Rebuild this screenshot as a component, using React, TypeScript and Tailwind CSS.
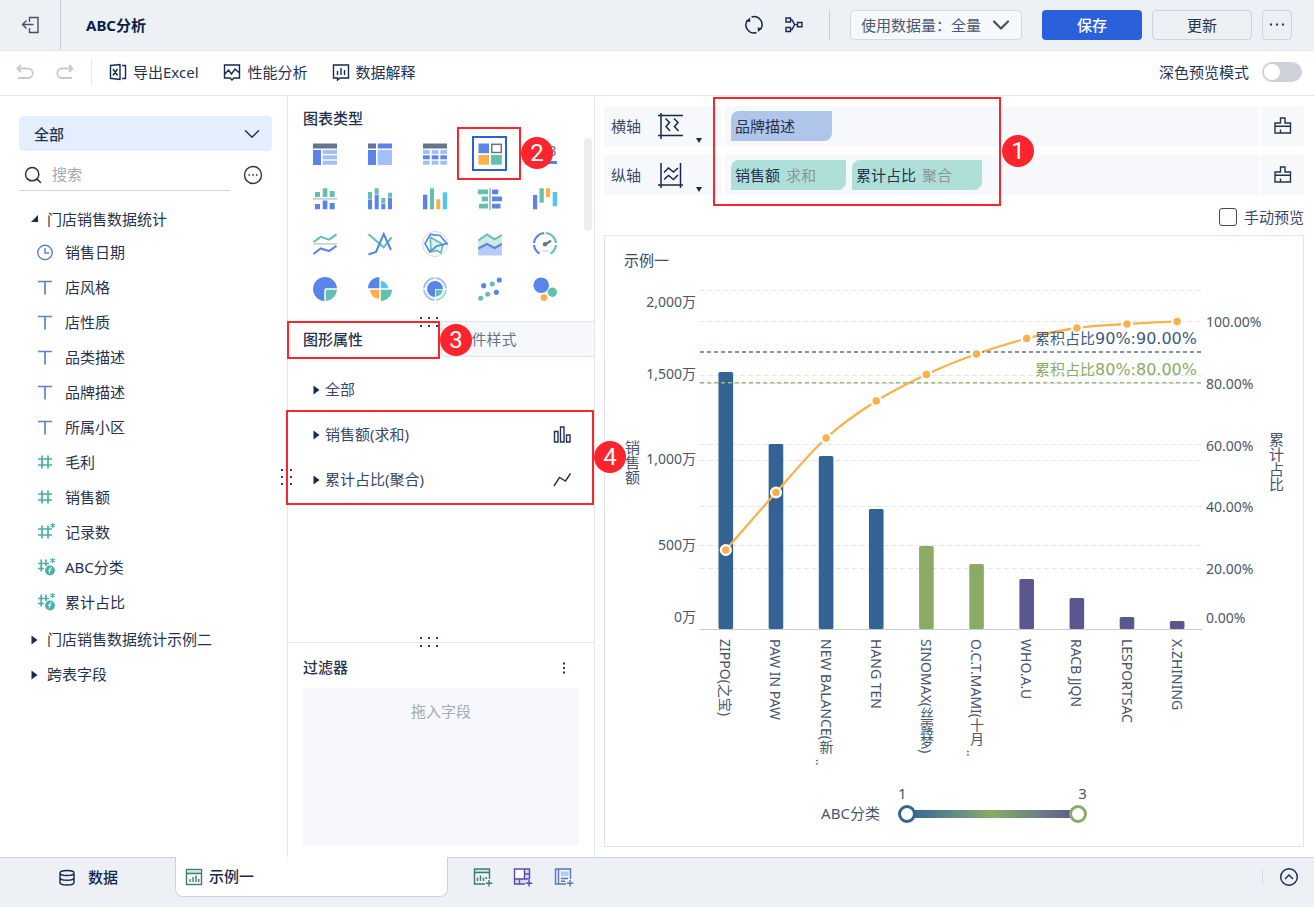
import type { ReactNode } from 'react'
import clsx from 'clsx'
import { ChevronDown, Search } from 'lucide-react'

const BLUE = '#5b84eb'
const LIGHT = '#a3bff7'
const GREEN = '#62bfb1'
const ORANGE = '#fbb04b'
const CYAN = '#50c8f5'
const SLATE = '#66758f'

type FieldKind = 'date' | 'text' | 'number' | 'count' | 'calc'

const fields: { name: string; kind: FieldKind }[] = [
  { name: '销售日期', kind: 'date' },
  { name: '店风格', kind: 'text' },
  { name: '店性质', kind: 'text' },
  { name: '品类描述', kind: 'text' },
  { name: '品牌描述', kind: 'text' },
  { name: '所属小区', kind: 'text' },
  { name: '毛利', kind: 'number' },
  { name: '销售额', kind: 'number' },
  { name: '记录数', kind: 'count' },
  { name: 'ABC分类', kind: 'calc' },
  { name: '累计占比', kind: 'calc' },
]

function Icon({ children, className, size = 20 }: { children: ReactNode; className?: string; size?: number }) {
  return (
    <svg
      width={size}
      height={size}
      viewBox={`0 0 ${size} ${size}`}
      fill="none"
      stroke="currentColor"
      strokeWidth="1.4"
      aria-hidden="true"
      className={clsx('shrink-0', className)}
    >
      {children}
    </svg>
  )
}

function FieldIcon({ kind }: { kind: FieldKind }) {
  if (kind === 'date') {
    return (
      <Icon className="text-[#5c82d0]">
        <circle cx="10" cy="9.500" r="7.200" />
        <path d="M10 5v5h4" />
      </Icon>
    )
  }
  if (kind === 'text') {
    return (
      <Icon className="text-[#6280c8]">
        <path d="M3 3.500h14M10 3.500v13" strokeWidth="1.700" />
      </Icon>
    )
  }
  if (kind === 'calc') {
    return (
      <Icon className="text-[#45b0a8]">
        <path d="M3 5.500h11M3 10.500h6M6.200 1.500v12M11 1.500V8" strokeWidth="1.700" />
        <path d="M17.500 0v5M15.300 1.200l4.400 2.500M19.700 1.200l-4.400 2.500" strokeWidth="1.100" />
        <circle cx="15" cy="12.500" r="4.900" fill="currentColor" stroke="none" />
        <path d="M16.800 9.800q-1.800-.5-2 1.500l-.5 4M13 12.200h3.300" stroke="#fff" strokeWidth="1" />
      </Icon>
    )
  }
  return (
    <Icon className="text-[#45b0a8]">
      <path d="M3 6h14M3 12h14M7 2.500v13M13 2.500v13" strokeWidth="1.700" />
      {kind === 'count' && <path d="M17.800 0v5M15.600 1.200L20 3.700M20 1.200l-4.400 2.500" strokeWidth="1.100" />}
    </Icon>
  )
}

function Caret({ open = false }: { open?: boolean }) {
  return (
    <svg width="8" height="10" viewBox="0 0 8 10" fill="#162c4f" aria-hidden="true" className="shrink-0">
      {open ? <path d="M7 1v7H0z" /> : <path d="M.5.500L6.500 5l-6 4.500z" />}
    </svg>
  )
}

function DragDots({ vertical = false, className }: { vertical?: boolean; className?: string }) {
  return (
    <span
      aria-hidden="true"
      className={clsx('absolute z-10 grid', vertical ? 'grid-cols-2 gap-x-[7px] gap-y-[5px]' : 'grid-cols-3 gap-x-[6px] gap-y-[6px]', className)}
    >
      {[0, 1, 2, 3, 4, 5].map((i) => (
        <i key={i} className="h-0.5 w-0.5 bg-[#2d3a57]" />
      ))}
    </span>
  )
}

function Step({ n, className }: { n: number; className: string }) {
  return (
    <span
      className={clsx(
        "absolute z-20 flex h-8 w-8 items-center justify-center rounded-full bg-[#fd252d] font-['Roboto',sans-serif] text-2xl text-white",
        className,
      )}
    >
      {n}
    </span>
  )
}

function Outline({ className }: { className: string }) {
  return <div className={clsx('pointer-events-none absolute z-10 border-2 border-[#fd252d]', className)} />
}

// chart type glyphs, each on a 24x24 grid
const chartTypes: { label: string; glyph: ReactNode }[] = [
  {
    label: '分组表',
    glyph: (
      <>
        <rect y="1.500" width="24" height="5" fill={SLATE} />
        <rect y="8" width="8" height="15" fill={BLUE} />
        {[8, 13.300, 18.700].map((y) => <rect key={y} x="9.700" y={y} width="14.300" height="4" fill={LIGHT} />)}
      </>
    ),
  },
  {
    label: '交叉表',
    glyph: (
      <>
        <rect y="1.500" width="8" height="5" fill={SLATE} />
        <rect x="9.700" y="1.500" width="14.300" height="5" fill={BLUE} />
        <rect y="8" width="8" height="15" fill={BLUE} />
        <rect x="9.700" y="8" width="14.300" height="15" fill={LIGHT} />
      </>
    ),
  },
  {
    label: '明细表',
    glyph: (
      <>
        <rect y="1.500" width="24" height="5" fill={SLATE} />
        {[8, 13.300, 18.700].map((y, r) =>
          [0, 8.700, 17.300].map((x) => <rect key={`${x}-${y}`} x={x} y={y} width="6.700" height="4" fill={r === 1 ? BLUE : LIGHT} />),
        )}
      </>
    ),
  },
  {
    label: '自定义图表',
    glyph: (
      <>
        <rect x="0.500" y="1.500" width="10.500" height="9.700" fill={BLUE} />
        <rect x="13.800" y="2.300" width="9.500" height="8.200" fill="#fff" stroke={SLATE} strokeWidth="1.500" />
        <rect x="0.500" y="13" width="10.500" height="9.700" fill={ORANGE} />
        <rect x="13" y="13" width="10.800" height="9.700" fill={GREEN} />
      </>
    ),
  },
  {
    label: 'KPI指标卡',
    glyph: (
      <>
        <text x="0" y="14" fontSize="14" fontFamily="Liberation Sans" fill={SLATE}>123</text>
        <rect y="19" width="24" height="3" fill={BLUE} />
      </>
    ),
  },
  {
    label: '对比柱状图',
    glyph: (
      <>
        <path d="M2 5h5v5H2zM9.700 1.300h4.700V10H9.700zM16.700 4h5v6h-5z" fill={GREEN} />
        <path d="M0 11h24v1.700H0z" fill="#c5cad3" />
        <path d="M2 17h5v5.300H2zM9.700 13.500h4.700v8.800H9.700zM16.700 16h5v6.300h-5z" fill={BLUE} />
      </>
    ),
  },
  {
    label: '堆积柱状图',
    glyph: (
      <>
        <path d="M0 5h4v7H0zM6.700 1.300h4v6.200h-4zM13.300 11h4v5.300h-4zM20 5.700h4v4.600h-4z" fill={GREEN} />
        <path d="M0 12.600h4v9.700H0zM6.700 8h4v14.300h-4zM13.300 16.700h4v5.600h-4zM20 10.700h4v11.600h-4z" fill={BLUE} />
      </>
    ),
  },
  {
    label: '多系列柱状图',
    glyph: (
      <>
        <path d="M0 7.700h4.300v14.600H0z" fill={BLUE} />
        <path d="M7 1.300h4v21H7z" fill={GREEN} />
        <path d="M13.300 12.300h4v10h-4z" fill={ORANGE} />
        <path d="M19.700 5.300H24v17h-4.300z" fill={CYAN} />
      </>
    ),
  },
  {
    label: '对比条形图',
    glyph: (
      <>
        <path d="M0 2.500h10v4.800H0zM3.700 9.500H10v4.800H3.700zM1 16.700h9v4.800H1z" fill={GREEN} />
        <path d="M11.200 1h1.600v22h-1.600z" fill="#a9b1be" />
        <path d="M14 2.500h6.300v4.800H14zM14 9.500h10v4.800H14zM14 16.700h8.500v4.800H14z" fill={BLUE} />
      </>
    ),
  },
  {
    label: '瀑布图',
    glyph: (
      <>
        <path d="M0 8h4.200v14.300H0z" fill={BLUE} />
        <path d="M6.500 1.300h4.300v14.400H6.500z" fill={GREEN} />
        <path d="M13 1.300h4.200V10H13z" fill={ORANGE} />
        <path d="M19.700 5H24v14.300h-4.300z" fill={CYAN} />
      </>
    ),
  },
  {
    label: '折线图',
    glyph: (
      <g fill="none" strokeWidth="2.100">
        <path d="M.5 10l7.200-5.200L16 7.700l7.500-5.400" stroke={GREEN} />
        <path d="M0 11.900h24" stroke="#c5cad3" strokeWidth="1.500" />
        <path d="M.5 22l7.200-5.500L16 19l7.500-5.200" stroke={BLUE} />
      </g>
    ),
  },
  {
    label: '曲线图',
    glyph: (
      <g fill="none" strokeWidth="2.100">
        <path d="M.5 2.300l15.200 13L23.500 5.500" stroke={GREEN} />
        <path d="M.5 22.500L8 20l7.700-18L23 18" stroke={BLUE} />
      </g>
    ),
  },
  {
    label: '雷达图',
    glyph: (
      <g fill="none" strokeWidth="1.700">
        <circle cx="12" cy="12" r="12.500" stroke="#d3d8e2" strokeWidth="1" />
        <path d="M7.300 5.300L20 12.500 18 21l-4.500-2.500L8 20z" stroke={GREEN} fill="#dff2ee" />
        <path d="M7.300 2.300L17 3.500l7 8.200L13.700 14l-7 6L2 11.500z" stroke={BLUE} />
      </g>
    ),
  },
  {
    label: '面积图',
    glyph: (
      <>
        <path d="M.3 8.500L9 3l7.500 4.800L23.800 3v20H.3z" fill="#cfe9e3" />
        <path d="M.3 17L9 12.300l7.500 4L23.800 12v11.500H.3z" fill="#b9cbf6" />
        <path d="M.3 8.500L9 2.500l7.500 4.900 7.300-4.400" stroke={GREEN} strokeWidth="2" fill="none" />
        <path d="M.3 16.500L9 12l7.500 4 7.300-4" stroke={BLUE} strokeWidth="2" fill="none" />
      </>
    ),
  },
  {
    label: '仪表盘',
    glyph: (
      <g fill="none" strokeWidth="2.200">
        <path d="M6.500 21.500A11 11 0 0 1 1 13M1 11.200A11 11 0 0 1 11.200 1" stroke={BLUE} />
        <path d="M12.800 1A11 11 0 0 1 23 11.200M23 13a11 11 0 0 1-5.500 8.500" stroke={GREEN} />
        <path d="M12.500 12.300L18 8.800" stroke={SLATE} />
        <circle cx="12" cy="12.300" r="2.200" fill={SLATE} stroke="none" />
        <path d="M8.500 19h7" stroke="#d3d8e2" strokeWidth="1.300" />
      </g>
    ),
  },
  {
    label: '饼图',
    glyph: (
      <>
        <path d="M11.300 12.700V24A12 12 0 1 1 24 11.300H12.500z" fill={BLUE} />
        <path d="M12.800 12.800H24A12 12 0 0 1 12.800 24z" fill={GREEN} />
      </>
    ),
  },
  {
    label: '玫瑰图',
    glyph: (
      <>
        <path d="M11.300 11.300H0A11.500 11.500 0 0 1 11.300 0z" fill={BLUE} />
        <path d="M12.800 11.300V4a7.300 7.300 0 0 1 7.200 7.300z" fill={CYAN} />
        <path d="M11.300 12.700v9.300A9.300 9.300 0 0 1 2 12.700z" fill={ORANGE} />
        <path d="M12.800 12.700H24A11.500 11.500 0 0 1 12.800 24z" fill={GREEN} />
      </>
    ),
  },
  {
    label: '旭日图',
    glyph: (
      <g fill="none" strokeWidth="2">
        <path d="M11.300 23A11 11 0 0 1 1 12.700M1 11.300A11 11 0 0 1 11.300 1M12.700 1A11 11 0 0 1 23 11.300" stroke={LIGHT} />
        <path d="M23 12.700A11 11 0 0 1 12.700 23" stroke="#a5dbd1" />
        <path d="M12 12v8a8 8 0 1 1 8-8z" fill={BLUE} stroke="none" />
        <path d="M12.800 12.800h7a7.500 7.500 0 0 1-7 7z" fill={GREEN} stroke="none" />
      </g>
    ),
  },
  {
    label: '散点图',
    glyph: (
      <>
        {[[5.700, 8.700], [21.300, 3], [18.300, 15.300]].map(([x, y]) => <circle key={x} cx={x} cy={y} r="2.600" fill={BLUE} />)}
        {[[14.300, 6.900], [9.700, 17.200], [2.700, 21.300]].map(([x, y]) => <circle key={x} cx={x} cy={y} r="2.500" fill={GREEN} />)}
      </>
    ),
  },
  {
    label: '气泡图',
    glyph: (
      <>
        <circle cx="8.200" cy="8.200" r="7.800" fill={BLUE} />
        <circle cx="19.300" cy="15.300" r="4.700" fill={GREEN} />
        <circle cx="11" cy="20.600" r="3.400" fill={ORANGE} />
      </>
    ),
  },
]

function Header() {
  return (
    <header className="flex h-[51px] items-center border-b border-[#e3e7ee] bg-[#edf0f5] pr-[22px]">
      <button type="button" aria-label="退出" className="flex h-full w-[61px] items-center justify-center border-r border-[#c9ced8]">
        <Icon className="text-[#44526b]">
          <path d="M9.500 7V2.500h8.500v15H9.500V13M2.500 9.500h11M6.500 5.500l-4 4 4 4" />
        </Icon>
      </button>
      <h1 className="ml-[25px] flex-1 text-[15px] font-bold text-[#0b1f45]">ABC分析</h1>
      <div className="flex items-center gap-5 text-[#14294d]">
        <button type="button" aria-label="刷新">
          <Icon>
            <path d="M7.500 2a8 8 0 0 1 9 12.300M12.500 17.500A8 8 0 0 1 3.500 5.200" strokeWidth="1.500" />
            <path d="M1.800 6.300L6 2.500l.3 4.600zM18.200 13.200L14 17l-.3-4.600z" fill="currentColor" stroke="none" />
          </Icon>
        </button>
        <button type="button" aria-label="血缘关系">
          <Icon>
            <path d="M2 3h4.500v4H2zM2 12.500h4.500v4H2zM13.500 7.500H18v4.200h-4.500zM6.500 5H8l2.700 4.600L8 14.500H6.500M10.700 9.600h2.800" />
          </Icon>
        </button>
      </div>
      <span className="mx-5 ml-[25px] h-[30px] w-px bg-[#c9ced8]" />
      <label className="relative flex h-[30px] w-[172px] items-center rounded-sm border border-[#d5dae2] bg-[#f7f8fb]">
        <span className="sr-only">使用数据量</span>
        <select className="w-full appearance-none bg-transparent pl-2.5 text-[15px] leading-6 text-[#4b5a70]">
          <option>使用数据量：全量</option>
        </select>
        <ChevronDown className="pointer-events-none absolute right-1.5 text-[#44526b]" size={28} strokeWidth={1.900} />
      </label>
      <div className="ml-5 flex gap-2.5 text-[15px]">
        <button type="button" className="h-[30px] w-[100px] rounded-sm bg-[#2b60dd] font-medium text-white">保存</button>
        <button type="button" className="h-[30px] w-[100px] rounded-sm border border-[#cdd2dc] text-[#25334d]">更新</button>
        <button type="button" aria-label="更多" className="flex h-[30px] w-[30px] items-center justify-center rounded-sm border border-[#cdd2dc]">
          <Icon className="text-[#25334d]" size={20}>
            <path d="M3 9.500h2M9 9.500h2M15 9.500h2" strokeWidth="2" />
          </Icon>
        </button>
      </div>
    </header>
  )
}

function Toolbar() {
  return (
    <div className="flex h-[45px] items-center border-b border-[#e3e7ee] bg-white pr-3 pb-0.5 pl-[15px] text-[15px] text-[#25334d]">
      <div className="flex gap-5 text-[#c4c9d3]">
        <button type="button" aria-label="撤销">
          <Icon>
            <path d="M6 3L2.500 6.500 6 10M2.500 6.500H13a4 4 0 0 1 0 9.500H3" strokeWidth="1.800" />
          </Icon>
        </button>
        <button type="button" aria-label="重做">
          <Icon>
            <path d="M14 3l3.500 3.500L14 10M17.500 6.500H7A4 4 0 0 0 7 16h10" strokeWidth="1.800" />
          </Icon>
        </button>
      </div>
      <span className="mx-4 h-[26px] w-px bg-[#e3e7ee]" />
      <div className="flex gap-[23px]">
        <button type="button" className="flex items-center gap-[5px]">
          <Icon className="text-[#14294d]">
            <path d="M2.500 3.500L12 2.500v15l-9.500-1.200zM14 3.500h3.500v13H14M5 7l4.500 6.500M9.500 7L5 13.500" />
          </Icon>
          导出Excel
        </button>
        <button type="button" className="flex items-center gap-[6px]">
          <Icon className="text-[#14294d]">
            <path d="M2.500 3h15v13H12l-2 2-2-2H2.500zM2.500 12.500l4-4.500 3 4 3.500-5 4.500 4" />
          </Icon>
          性能分析
        </button>
        <button type="button" className="flex items-center gap-[5px]">
          <Icon className="text-[#14294d]">
            <path d="M2.500 3h15v13H9l-2.500 2v-2h-4zM6.500 9v4M10 6v7M13.500 8v5" />
          </Icon>
          数据解释
        </button>
      </div>
      <label className="ml-auto flex items-center gap-[13px]">
        深色预览模式
        <input
          type="checkbox"
          className="h-5 w-10 appearance-none rounded-full bg-[#cdd2da] before:m-0.5 before:block before:h-4 before:w-4 before:rounded-full before:bg-white"
        />
      </label>
    </div>
  )
}

function FieldPanel() {
  return (
    <aside className="w-72 shrink-0 border-r border-[#e3e7ee] pt-5 text-[15px] text-[#25334d]">
      <label className="relative mr-[15px] ml-[19px] flex h-[35px] items-center rounded-[4px] bg-[#e3eeff]">
        <span className="sr-only">数据表</span>
        <select className="w-full appearance-none bg-transparent pl-[15px] leading-6 font-medium">
          <option>全部</option>
        </select>
        <ChevronDown className="pointer-events-none absolute right-[7px]" size={26} strokeWidth={1.400} />
      </label>
      <div className="mt-2 mr-6 ml-[19px] flex items-center justify-between">
        <label className="flex h-8 w-[211px] items-center gap-[9px] border-b border-[#d0d4dc] pl-1">
          <Search size={20} strokeWidth={1.800} className="shrink-0" />
          <input aria-label="搜索" placeholder="搜索" className="w-full min-w-0 placeholder:text-[#a3a9b5]" />
        </label>
        <button type="button" aria-label="更多">
          <Icon>
            <circle cx="10" cy="10" r="8.500" />
            <path d="M5.500 10H7M9.200 10h1.600M13 10h1.500" strokeWidth="1.600" />
          </Icon>
        </button>
      </div>
      <div className="mt-3 flex h-8 items-center gap-2 pl-[31px]">
        <Caret open />
        门店销售数据统计
      </div>
      <ul>
        {fields.map((f) => (
          <li key={f.name} className="flex h-[35px] items-center gap-[10px] pl-[35px]">
            <FieldIcon kind={f.kind} />
            {f.name}
          </li>
        ))}
      </ul>
      <div className="mt-0.5 flex h-[35px] items-center gap-2 pl-[31px]">
        <Caret />
        门店销售数据统计示例二
      </div>
      <div className="flex h-[35px] items-center gap-2 pl-[31px]">
        <Caret />
        跨表字段
      </div>
    </aside>
  )
}

function ConfigPanel() {
  return (
    <section className="relative flex w-[307px] shrink-0 flex-col border-r border-[#e3e7ee] text-[15px] text-[#25334d]">
      <DragDots vertical className="top-[373px] -left-[7px]" />
      <div className="relative h-[225px] pt-2.5">
        <h2 className="mb-px pl-[15px] leading-6 font-medium">图表类型</h2>
        <div className="ml-[9px] grid w-[275px] grid-cols-5">
          {chartTypes.map((t) => (
            <button key={t.label} type="button" aria-label={t.label} className="flex h-[45px] items-center justify-center">
              <span className={clsx('flex h-[35px] w-[35px] items-center justify-center', t.label === '自定义图表' && 'border-2 border-[#2b60dd]')}>
                <svg width="24" height="24" viewBox="0 0 24 24" className="shrink-0 overflow-visible">{t.glyph}</svg>
              </span>
            </button>
          ))}
        </div>
        <span className="absolute top-[42px] right-0.5 h-[93px] w-2 rounded-full bg-[#ecedf0]" />
        <Outline className="top-[31px] left-[169px] h-[53px] w-16" />
        <Step n={2} className="top-[41px] left-[233px]" />
      </div>
      <div className="relative flex-1">
        <DragDots className="-top-1 left-[132px]" />
        <div className="flex h-9">
          <button type="button" className="flex-1 pl-[15px] text-left font-medium">图形属性</button>
          <button type="button" className="flex-1 rounded-bl-sm border border-r-0 border-[#e0e4ec] bg-[#f7f8fc] pl-[15px] text-left text-[#66748b]">组件样式</button>
        </div>
        <Outline className="top-0 -left-px h-[38px] w-[153px]" />
        <Step n={3} className="top-[3px] left-[152px]" />
        <ul className="pt-2.5 text-[#3a4964]">
          <li className="flex h-[45px] items-center gap-1 pr-[22px] pl-[25px]"><Caret />全部</li>
          <li className="flex h-[45px] items-center gap-1 pr-[22px] pl-[25px]">
            <Caret />
            <span className="flex-1">销售额(求和)</span>
            <Icon className="text-[#25334d]">
              <path d="M2.500 6.500H6v10.500H2.500zM8.500 2H12v15H8.500zM14.500 10H18v7h-3.500z" />
            </Icon>
          </li>
          <li className="flex h-[45px] items-center gap-1 pr-[22px] pl-[25px]">
            <Caret />
            <span className="flex-1">累计占比(聚合)</span>
            <Icon className="text-[#25334d]">
              <path d="M2 16l5.500-8.500 6 3.500L18.500 3.500" />
            </Icon>
          </li>
        </ul>
        <Outline className="top-[89px] -left-0.5 h-[95px] w-[308px]" />
        <Step n={4} className="top-[120px] left-[306px]" />
      </div>
      <div className="relative border-t border-[#e3e7ee] px-[15px] pb-[11px]">
        <DragDots className="-top-1.5 left-[132px]" />
        <div className="flex h-[45px] items-center justify-between pt-1">
          <h2 className="font-medium">过滤器</h2>
          <button type="button" aria-label="更多" className="mr-[5px]">
            <Icon>
              <path d="M10 4.500v2M10 9v2M10 13.500v2" strokeWidth="2" />
            </Icon>
          </button>
        </div>
        <div className="h-[158px] bg-[#f7f8fc] pt-[11px] text-center leading-6 text-[#a3abb9]">拖入字段</div>
      </div>
    </section>
  )
}

function AxisRow({ label, icon, children }: { label: string; icon: ReactNode; children: ReactNode }) {
  return (
    <div className="flex h-10">
      <div className="relative mr-1 flex w-[117px] items-center bg-[#f7f8fc] pl-[7px]">
        {label}
        <button type="button" aria-label={`${label}图形`} className="ml-[15px] flex items-end gap-3">
          <svg width="28" height="28" viewBox="0 0 28 28" fill="none" stroke="#14294d" strokeWidth="1.500" aria-hidden="true">{icon}</svg>
          <svg width="6" height="10" viewBox="0 0 6 10" fill="#14294d" aria-hidden="true" className="-mb-2"><path d="M0 0h6L3 5z" /></svg>
        </button>
      </div>
      <div className="flex flex-1 items-center gap-1.5 bg-[#f7f8fc] pl-1.5">{children}</div>
      <button type="button" aria-label={`清空${label}`} className="ml-0.5 flex w-[43px] items-center justify-center bg-[#f7f8fc]">
        <Icon className="text-[#25334d]">
          <path d="M2 7h5.500V2h4.500v5h5.500v10H2zM2 10.300h15.500M7.500 13.500V17" />
        </Icon>
      </button>
    </div>
  )
}

const BAR_STEP = 50.150
const CENTER = 120.800
const BASE = 343

const brands = [
  { name: 'ZIPPO(之宝)', top: 86, share: 264, color: '#336393', sideways: true },
  { name: 'PAW IN PAW', top: 158, share: 206.500, color: '#336393' },
  { name: 'NEW BALANCE(新', top: 170, share: 152, color: '#336393', cut: 476 },
  { name: 'HANG TEN', top: 223, share: 115, color: '#336393' },
  { name: 'SINOMAX(丝露梦)', top: 260, share: 88.500, color: '#8aaa66' },
  { name: 'O.C.T.MAMI(十月', top: 278, share: 68, color: '#8aaa66', cut: 467 },
  { name: 'WHO.A.U', top: 293, share: 52.500, color: '#5a578f' },
  { name: 'RACB JJQN', top: 312, share: 42, color: '#5a578f' },
  { name: 'LESPORTSAC', top: 331, share: 38, color: '#5a578f' },
  { name: 'X.ZHINING', top: 335, share: 35.500, color: '#5a578f' },
]

const salesTicks: [string, number][] = [['2,000万', 15], ['1,500万', 87], ['1,000万', 172], ['500万', 258], ['0万', 330]]
const shareTicks: [string, number][] = [['100.00%', 35], ['80.00%', 97], ['60.00%', 159], ['40.00%', 220], ['20.00%', 282], ['0.00%', 331]]
const gridLines = [4.500, 35.500, 89.500, 97.500, 158.500, 174.500, 220.500, 259.500, 282.500]

const points = brands.map((b, i) => [CENTER + i * BAR_STEP, b.share])

// catmull-rom spline through the cumulative share points
const curve = points.slice(1).reduce((d, [x, y], i) => {
  const [ax, ay] = points[Math.max(i - 1, 0)]
  const [bx, by] = points[i]
  const [cx, cy] = points[Math.min(i + 2, points.length - 1)]
  return `${d}C${bx + (x - ax) / 6} ${by + (y - ay) / 6} ${x - (cx - bx) / 6} ${y - (cy - by) / 6} ${x} ${y}`
}, `M${points[0][0]} ${points[0][1]}`)

function ParetoChart() {
  return (
    <svg viewBox="0 0 698 494" className="block h-auto w-full" role="img" aria-label="销售额与累计占比" fontSize="14" fill="#4a566b">
      {gridLines.map((y) => (
        <path key={y} d={`M95 ${y}H597`} stroke="#e2e4e8" strokeDasharray="5 3" />
      ))}
      {brands.map((b, i) => (
        <rect key={b.name} x={points[i][0] - 7.300} y={b.top} width="14.600" height={BASE - b.top} rx="1.500" fill={b.color} />
      ))}
      <path d={`M95 ${BASE + 0.5}H597`} stroke="#c8cbd1" />
      <path d={curve} fill="none" stroke={ORANGE} strokeWidth="2.300" />
      <path d="M95 66H597" stroke="#5c7696" strokeWidth="1.600" strokeDasharray="4 3" />
      <path d="M95 96.800H597" stroke="#9dba7b" strokeWidth="1.600" strokeDasharray="4 3" />
      {points.map(([x, y]) => (
        <circle key={x} cx={x} cy={y} r="4.900" fill={ORANGE} stroke="#fff" strokeWidth="2.400" />
      ))}
      {salesTicks.map(([t, y]) => (
        <text key={t} x="91" y={y} textAnchor="end" dominantBaseline="central">{t}</text>
      ))}
      {shareTicks.map(([t, y]) => (
        <text key={t} x="601" y={y} dominantBaseline="central">{t}</text>
      ))}
      <g textAnchor="end" fontSize="15" className="font-['DejaVu_Sans','Noto_Sans_CJK_SC',sans-serif]">
        <text x="592" y="58" fill="#405c7e">累积占比<tspan fontSize="16">90%:90.00%</tspan></text>
        <text x="592" y="89" fill="#8aaa66">累积占比<tspan fontSize="16">80%:80.00%</tspan></text>
      </g>
      <g fontSize="15" className="[writing-mode:vertical-rl]">
        <text x="27" y="154">销售额</text>
        <text x="671" y="146">累计占比</text>
      </g>
      {brands.map((b, i) => {
        const x = points[i][0]
        return (
          <g key={b.name}>
            {b.sideways ? (
              <text transform={`translate(${x} 353) rotate(90)`} dominantBaseline="central">{b.name}</text>
            ) : (
              <text x={x} y="353" className="[writing-mode:vertical-rl]">{b.name}</text>
            )}
            {b.cut && <text transform={`translate(${x - 10} ${b.cut - 3}) rotate(90)`} fontSize="12">..</text>}
          </g>
        )
      })}
    </svg>
  )
}

const thumb =
  'pointer-events-none absolute inset-x-0 top-0 h-[18px] w-full appearance-none bg-transparent [&::-webkit-slider-thumb]:pointer-events-auto [&::-webkit-slider-thumb]:h-[18px] [&::-webkit-slider-thumb]:w-[18px] [&::-webkit-slider-thumb]:appearance-none [&::-webkit-slider-thumb]:rounded-full [&::-webkit-slider-thumb]:border-3 [&::-webkit-slider-thumb]:bg-white'

function Legend() {
  return (
    <div className="flex items-end justify-center gap-[18px] text-[15px] leading-5 text-[#4a566b]">
      <span>ABC分类</span>
      <div className="w-[189px]">
        <div className="mb-0.5 flex justify-between"><span>1</span><span>3</span></div>
        <div className="relative h-[18px]">
          <div className="absolute inset-x-2 top-[5px] h-2 bg-linear-to-r from-[#336393] via-[#8aaa66] to-[#5a578f]" />
          <input type="range" min="1" max="3" defaultValue="1" aria-label="ABC分类最小值" className={clsx(thumb, '[&::-webkit-slider-thumb]:border-[#336393]')} />
          <input type="range" min="1" max="3" defaultValue="3" aria-label="ABC分类最大值" className={clsx(thumb, '[&::-webkit-slider-thumb]:border-[#8aaa66]')} />
        </div>
      </div>
    </div>
  )
}

function Canvas() {
  return (
    <section className="relative flex min-w-0 flex-1 flex-col px-[10px] pt-[10px] pb-[10px] pl-[9px] text-[15px] text-[#3a4964]">
      <div className="flex flex-col gap-[9px]">
        <AxisRow label="横轴" icon={<path d="M2 3.500h25M2 23.500h25M5 1v26M9.500 6.500l4 4-3.500 4 4 4.500M18 6.500l4 4-3.500 4 4 4.500" />}>
          <span className="flex h-[30px] w-[101px] items-center rounded-tl-lg rounded-br-lg bg-[#afc5e9] pl-1 text-[#25334d]">品牌描述</span>
        </AxisRow>
        <AxisRow label="纵轴" icon={<path d="M5 2v25M24.500 2v25M2 24h25M8 11.500L12.500 7l5 4L22 7M8 18.500l4.500-4 5 4 4.500-4.500" />}>
          <span className="flex h-[30px] w-[115px] items-center gap-1.5 rounded-tl-lg rounded-br-lg bg-[#aee0d9] pl-1 text-[#25334d]">
            销售额<span className="text-[#8b949c]">求和</span>
          </span>
          <span className="flex h-[30px] w-[130px] items-center gap-1.5 rounded-tl-lg rounded-br-lg bg-[#aee0d9] pl-1 text-[#25334d]">
            累计占比<span className="text-[#8b949c]">聚合</span>
          </span>
        </AxisRow>
      </div>
      <Outline className="top-px left-[118px] h-[109px] w-[288px]" />
      <Step n={1} className="top-[39px] left-[407px]" />
      <label className="flex h-10 items-center gap-[7px] self-end pt-1">
        <input type="checkbox" className="h-[18px] w-[18px] appearance-none rounded-[3px] border border-[#3a4964]" />
        手动预览
      </label>
      <div className="flex-1 border border-[#e3e5e9]">
        <h2 className="h-[50px] pl-[19px] leading-12">示例一</h2>
        <ParetoChart />
        <div className="pt-[3px] pb-5">
          <Legend />
        </div>
      </div>
    </section>
  )
}

function Footer() {
  return (
    <footer className="flex h-[50px] border-t border-[#cdd2da] bg-[#edf0f5] text-[15px] text-[#14294d]">
      <button type="button" className="flex h-[39px] w-[175px] items-center justify-center gap-[11px] font-medium">
        <Icon>
          <path d="M3 5c0-3.300 14-3.300 14 0v9.500c0 3.300-14 3.300-14 0zM3 5c0 3.300 14 3.300 14 0M3 9.700c0 3.300 14 3.300 14 0" />
        </Icon>
        数据
      </button>
      <button type="button" className="-mt-px flex h-10 w-[273px] items-center gap-[5px] rounded-b-lg border border-t-0 border-[#cdd2da] bg-white pl-2 font-medium">
        <Icon className="text-[#3d7d70]">
          <rect x="2.500" y="2.500" width="15" height="15" />
          <path d="M3 3h14v3H3z" fill="#cfe3df" stroke="none" />
          <path d="M2.500 6.500h15M6 12v3M9 10v5M12 8.500V15M14.700 12v3" />
        </Icon>
        示例一
      </button>
      <div className="ml-[25px] flex h-[38px] items-center gap-5">
        <button type="button" aria-label="添加组件">
          <Icon className="text-[#3d7d70]">
            <path d="M2 2.500h14v3H2z" fill="#cfe3df" stroke="none" />
            <path d="M12 17H1.500V2h15v10M1.500 5.500h15M4.500 10.500V14M7.500 8.500V14M10.500 10.500V14M13.300 10v2M16 13v6.500M12.800 16.200h6.500" />
          </Icon>
        </button>
        <button type="button" aria-label="添加仪表板">
          <Icon className="text-[#5a4bb0]">
            <path d="M1.500 2h15v15h-15z" fill="#ddd8f5" stroke="none" />
            <path d="M2 2h9.500v9.500H2z" fill="#fff" stroke="none" />
            <path d="M12 17H1.500V2h15v10M11.500 2v10M1.500 12h15M6.500 12v5M11.500 7h5M16 13v6.500M12.800 16.200h6.500" />
          </Icon>
        </button>
        <button type="button" aria-label="添加报告" className="ml-px">
          <Icon className="text-[#5878b8]">
            <path d="M12 17H1.500V2h15v10M4.500 2v15M16 13v6.500M12.800 16.200h6.500" />
            <path d="M7 4.500h7.500V9H7z" fill="#b5ccf2" stroke="none" />
            <path d="M7 11.500h7M7 14.300h4" />
          </Icon>
        </button>
      </div>
      <div className="mr-[15px] ml-auto flex h-[38px] items-center gap-4">
        <span className="h-4 w-px bg-[#d5d9e1]" />
        <button type="button" aria-label="展开">
          <Icon>
            <circle cx="10" cy="10" r="8.300" />
            <path d="M6 12l4-4 4 4" />
          </Icon>
        </button>
      </div>
    </footer>
  )
}

export default function App() {
  return (
    <div className="flex min-h-screen flex-col bg-white font-['Noto_Sans','Noto_Sans_CJK_SC',sans-serif]">
      <Header />
      <Toolbar />
      <main className="flex flex-1">
        <FieldPanel />
        <ConfigPanel />
        <Canvas />
      </main>
      <Footer />
    </div>
  )
}
